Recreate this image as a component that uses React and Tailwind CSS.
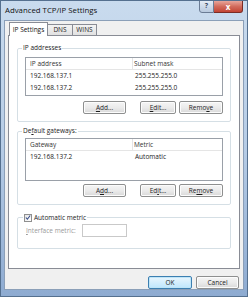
import React from "react";

const font = { fontFamily: '"Open Sans", "Noto Sans", sans-serif' };

function Btn({ children, w = "w-[43px]", def = false, cls = "" }) {
  return (
    <div
      className={`${w} ${cls} h-[13px] flex items-center justify-center rounded-[2px] border text-[6.5px] text-[#1e1e1e] ${
        def
          ? "border-[#3c7fb1] bg-gradient-to-b from-[#eaf6fd] to-[#bee6fd] shadow-[inset_0_0_0_1px_#bfe5f8]"
          : "border-[#8e8f8f] bg-gradient-to-b from-[#f5f5f5] via-[#ebebeb] to-[#d9d9d9] shadow-[inset_0_0_0_1px_#fcfcfc]"
      }`}
    >
      {children}
    </div>
  );
}

function List({ headers, rows, h }) {
  return (
    <div className={`${h} border border-[#9aa0a8] bg-white`}>
      <div className="flex h-[12px] items-center border-b border-[#e5e5e5] text-[6.5px] text-[#333]">
        <div className="w-[107px] pl-[4px] border-r border-[#e5e5e5] h-full flex items-center">{headers[0]}</div>
        <div className="flex-1 pl-[1px]">{headers[1]}</div>
      </div>
      {rows.map((r, i) => (
        <div key={i} className="flex h-[12px] items-center text-[6.5px] text-[#222]">
          <div className="w-[107px] pl-[4px]">{r[0]}</div>
          <div className="flex-1 pl-[2px]">{r[1]}</div>
        </div>
      ))}
    </div>
  );
}

function Group({ legend, children, cls = "" }) {
  return (
    <fieldset className={`border border-[#d5dfe5] rounded-[2px] px-[7px] ${cls}`}>
      <legend className="ml-[-3px] px-[1px] text-[6.5px] text-[#222] leading-[8px]">{legend}</legend>
      {children}
    </fieldset>
  );
}

export default function App() {
  return (
    <div
      style={font}
      className="w-[248px] h-[297px] flex flex-col bg-gradient-to-b from-[#c9dbee] via-[#b6cce6] to-[#8eabd1] border border-[#55708f] overflow-hidden"
    >
      {/* title bar */}
      <div className="h-[19px] flex justify-between pl-[4px] pr-[4px]">
        <div className="pt-[4px] text-[7.8px] text-[#111]">Advanced TCP/IP Settings</div>
        <div className="flex h-[13px] -mt-[1px]">
          <div className="w-[15px] h-full border border-[#6b7c95] rounded-bl-[3px] bg-gradient-to-b from-[#e4ecf5] to-[#b8c9de] flex items-center justify-center text-[7px] font-bold text-[#3d4c63]">
            ?
          </div>
          <div className="w-[29px] h-full border border-[#7a2c25] border-l-0 rounded-br-[3px] bg-gradient-to-b from-[#e7a59b] via-[#d26b5c] to-[#c24333] flex items-center justify-center text-[8px] font-bold text-white">
            x
          </div>
        </div>
      </div>
      {/* client */}
      <div className="flex-1 mx-[3px] mb-[6px] bg-[#f0f0f0] border border-[#8b9fb8] flex flex-col">
        {/* tabs */}
        <div className="flex items-end h-[14px] pl-[4px]">
          <div className="h-[14px] w-[39px] bg-white border border-b-0 border-[#898c95] flex items-center justify-center text-[6.5px] text-[#111] relative top-[1px] z-10">
            IP Settings
          </div>
          <div className="h-[11px] w-[25px] border border-l-0 border-b-0 border-[#898c95] bg-gradient-to-b from-[#f3f3f3] to-[#e1e1e1] flex items-center justify-center text-[6.5px] text-[#222]">
            DNS
          </div>
          <div className="h-[11px] w-[24px] border border-l-0 border-b-0 border-[#898c95] bg-gradient-to-b from-[#f3f3f3] to-[#e1e1e1] flex items-center justify-center text-[6.5px] text-[#222]">
            WINS
          </div>
        </div>
        {/* panel */}
        <div className="ml-[3px] mr-[3px] h-[234px] bg-white border border-[#898c95] pt-[8px] px-[8px] flex flex-col">
          <Group legend="IP addresses" cls="h-[78px] pt-[5px]">
            <List
              h="h-[39px]"
              headers={["IP address", "Subnet mask"]}
              rows={[
                ["192.168.137.1", "255.255.255.0"],
                ["192.168.137.2", "255.255.255.0"],
              ]}
            />
            <div className="flex justify-end gap-[3px] mt-[5px]">
              <Btn cls="mr-[11px]">
                <span><u>A</u>dd...</span>
              </Btn>
              <Btn w="w-[36px]">
                <span><u>E</u>dit...</span>
              </Btn>
              <Btn w="w-[44px]">
                <span>Remo<u>v</u>e</span>
              </Btn>
            </div>
          </Group>
          <Group legend={<span>De<u>f</u>ault gateways:</span>} cls="h-[78px] mt-[5px] pt-[3px]">
            <List h="h-[43px]" headers={["Gateway", "Metric"]} rows={[["192.168.137.2", "Automatic"]]} />
            <div className="flex justify-end gap-[3px] mt-[3px]">
              <Btn cls="mr-[11px]">
                <span>A<u>d</u>d...</span>
              </Btn>
              <Btn w="w-[36px]">
                <span>Ed<u>i</u>t...</span>
              </Btn>
              <Btn w="w-[44px]">
                <span>Re<u>m</u>ove</span>
              </Btn>
            </div>
          </Group>
          <fieldset className="mt-[8px] h-[36px] border border-[#d5dfe5] rounded-[2px] px-[7px]">
            <legend className="ml-[-2px] px-[1px] flex items-center gap-[2px] text-[6.5px] text-[#222] leading-[9px]">
              <span className="w-[8px] h-[8px] border border-[#8f8f8f] bg-gradient-to-br from-[#e6e6e6] to-white flex items-center justify-center">
                <svg width="7" height="7" viewBox="0 0 7 7">
                  <path d="M1 3.5 L2.8 5.5 L6 1.2" stroke="#3a4f8a" strokeWidth="1.3" fill="none" />
                </svg>
              </span>
              <span>Automatic metric</span>
            </legend>
            <div className="flex items-center mt-[2px]">
              <div className="w-[57px] pl-[1px] text-[6.5px] text-[#9a9a9a]">
                <u>I</u>nterface metric:
              </div>
              <div className="w-[45px] h-[13px] border border-[#c9c9c9] bg-white"></div>
            </div>
          </fieldset>
        </div>
        {/* OK cancel */}
        <div className="flex justify-end gap-[4px] mr-[4px] mt-[7px]">
          <Btn w="w-[44px]" def>
            OK
          </Btn>
          <Btn w="w-[43px]">Cancel</Btn>
        </div>
      </div>
    </div>
  );
}
